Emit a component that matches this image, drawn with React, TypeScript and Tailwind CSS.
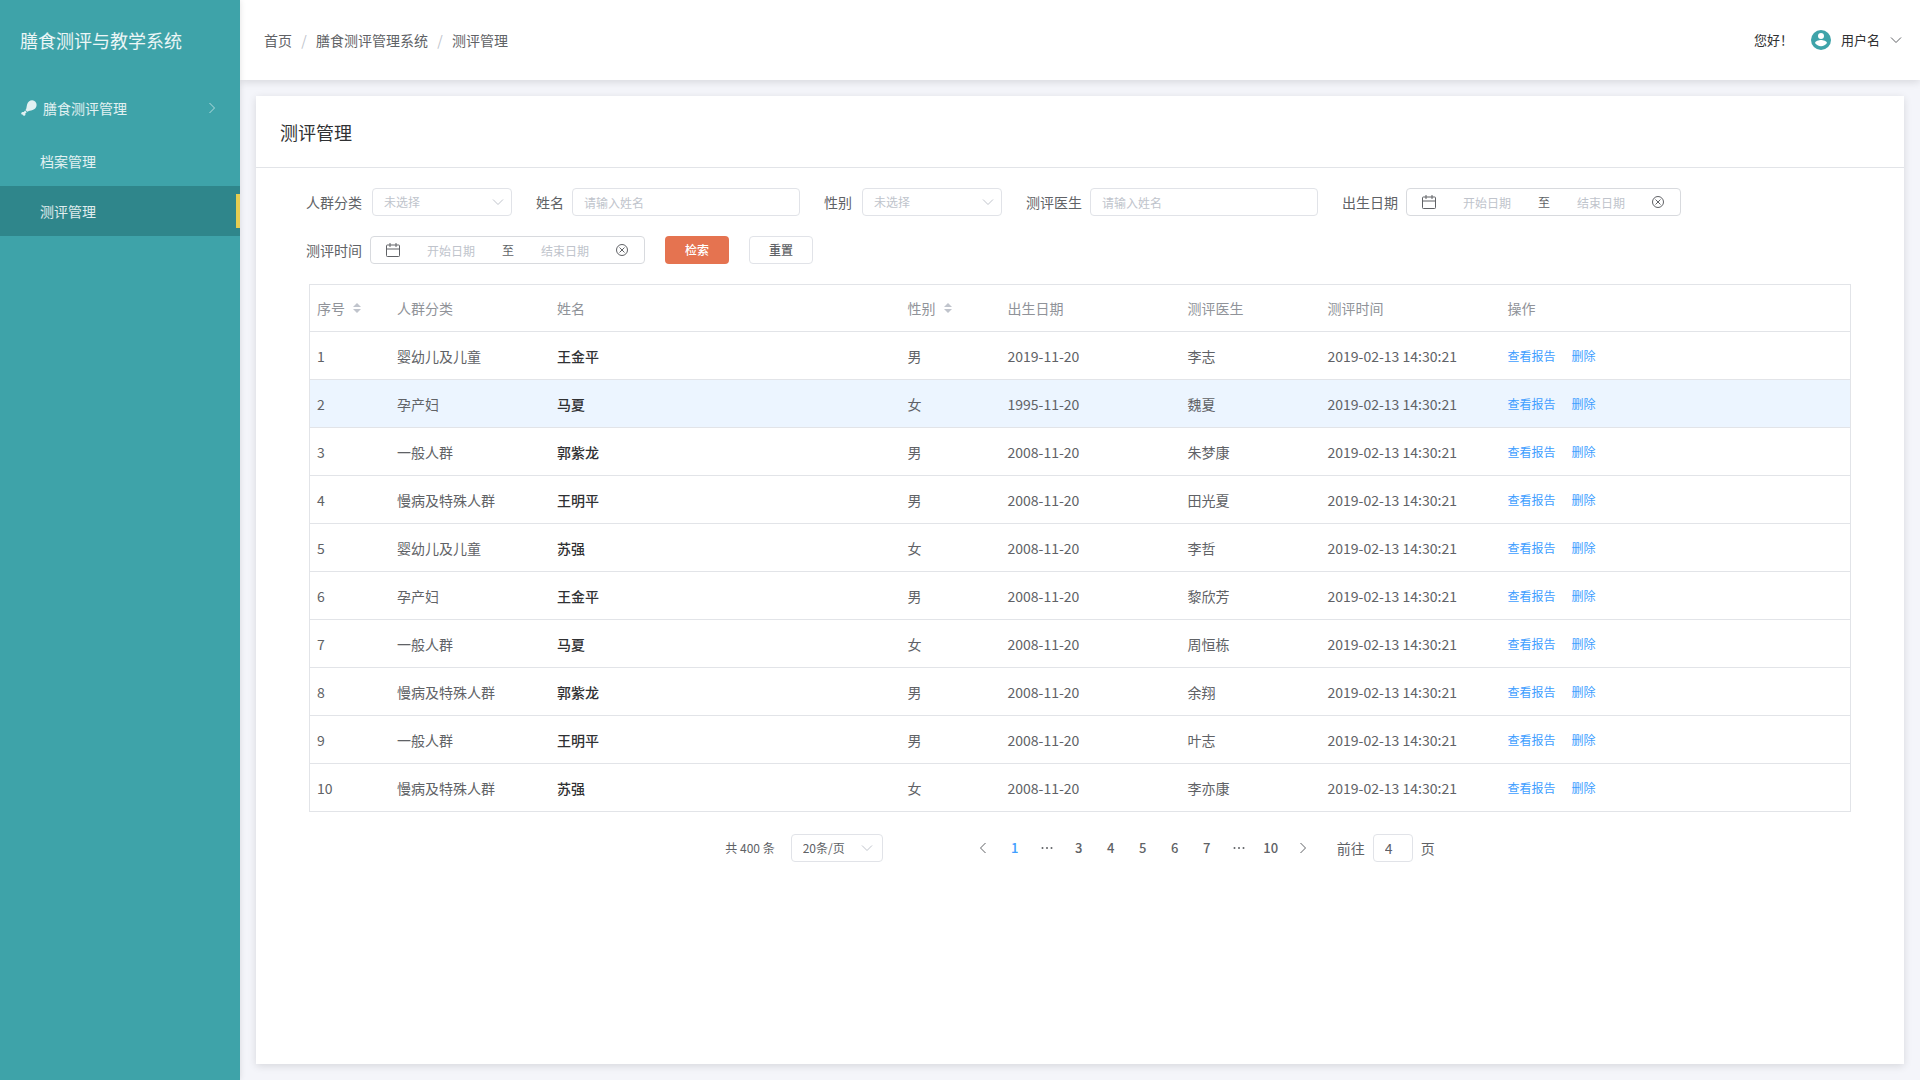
import { ReactNode } from 'react';

interface Assessment {
  id: number;
  group: string;
  name: string;
  gender: string;
  birthday: string;
  doctor: string;
}

const rows: Assessment[] = [
  { id: 1, group: '婴幼儿及儿童', name: '王金平', gender: '男', birthday: '2019-11-20', doctor: '李志' },
  { id: 2, group: '孕产妇', name: '马夏', gender: '女', birthday: '1995-11-20', doctor: '魏夏' },
  { id: 3, group: '一般人群', name: '郭紫龙', gender: '男', birthday: '2008-11-20', doctor: '朱梦康' },
  { id: 4, group: '慢病及特殊人群', name: '王明平', gender: '男', birthday: '2008-11-20', doctor: '田光夏' },
  { id: 5, group: '婴幼儿及儿童', name: '苏强', gender: '女', birthday: '2008-11-20', doctor: '李哲' },
  { id: 6, group: '孕产妇', name: '王金平', gender: '男', birthday: '2008-11-20', doctor: '黎欣芳' },
  { id: 7, group: '一般人群', name: '马夏', gender: '女', birthday: '2008-11-20', doctor: '周恒栋' },
  { id: 8, group: '慢病及特殊人群', name: '郭紫龙', gender: '男', birthday: '2008-11-20', doctor: '余翔' },
  { id: 9, group: '一般人群', name: '王明平', gender: '男', birthday: '2008-11-20', doctor: '叶志' },
  { id: 10, group: '慢病及特殊人群', name: '苏强', gender: '女', birthday: '2008-11-20', doctor: '李亦康' },
];

const columns = [
  { label: '序号', width: 'w-20', sortable: true },
  { label: '人群分类', width: 'w-40' },
  { label: '姓名', width: '' },
  { label: '性别', width: 'w-[100px]', sortable: true },
  { label: '出生日期', width: 'w-[180px]' },
  { label: '测评医生', width: 'w-[140px]' },
  { label: '测评时间', width: 'w-[180px]' },
  { label: '操作', width: '' },
];

// 0 stands for a run of skipped pages
const pages = [1, 0, 3, 4, 5, 6, 7, 0, 10];

interface ChevronProps {
  className: string;
  d?: string;
  viewBox?: string;
}

function Chevron({ className, d = 'M1 1.5L6 6.5L11 1.5', viewBox = '0 0 12 8' }: ChevronProps) {
  return (
    <svg className={className} viewBox={viewBox} fill="none" stroke="currentColor" aria-hidden="true">
      <path d={d} />
    </svg>
  );
}

function Drumstick() {
  return (
    <svg className="w-4 h-4" viewBox="0 0 16 16" fill="currentColor" aria-hidden="true">
      <path d="M11.300 0.200C13.800 0.300 15.700 2.300 15.600 4.900C15.500 7.300 13.900 9.200 11.600 9.900C9.600 10.500 7.600 10.600 6.200 11.800L4.500 10.100C5.700 8.600 5.500 6.600 6.100 4.400C6.800 1.800 8.800 0.100 11.300 0.200Z" />
      <path d="M4.100 10.600L5.700 12.200L4.300 13.400C4.700 14.400 4.300 15.400 3.400 15.700C2.500 16 1.700 15.500 1.600 14.600C.6 14.600 0 13.800 .3 12.900C.6 12.100 1.700 11.800 2.700 12.100Z" />
    </svg>
  );
}

function SortIcon() {
  return (
    <svg className="w-2 h-2.5" viewBox="0 0 8 10" fill="#c0c4cc" aria-hidden="true">
      <path d="M4 0L8 4H0Z" />
      <path d="M4 10L0 6H8Z" />
    </svg>
  );
}

function SelectField({ id, label }: { id: string; label: string }) {
  return (
    <div className="flex items-center gap-2.5">
      <label htmlFor={id}>{label}</label>
      <div className="relative">
        <select
          id={id}
          className="block appearance-none w-[140px] h-7 pl-[11px] pr-7 bg-white border border-[#e1e3e8] rounded text-xs text-[#c0c4cc]"
        >
          <option>未选择</option>
        </select>
        <Chevron className="absolute right-2 top-2.5 w-3 h-2 text-[#c0c4cc] pointer-events-none" />
      </div>
    </div>
  );
}

function TextField({ id, label }: { id: string; label: string }) {
  return (
    <div className="flex items-center gap-2">
      <label htmlFor={id}>{label}</label>
      <input
        id={id}
        type="text"
        placeholder="请输入姓名"
        className="w-[228px] h-7 px-[11px] border border-[#e1e3e8] rounded text-xs placeholder:text-[#c0c4cc]"
      />
    </div>
  );
}

function DateRange({ id, label }: { id: string; label: string }) {
  return (
    <div className="flex items-center gap-2">
      <label htmlFor={id}>{label}</label>
      <div className="flex items-center w-[275px] h-7 pl-[15px] pr-4 border border-[#d8dade] rounded-sm text-xs">
        <svg className="w-3.5 h-3.5 shrink-0" viewBox="0 0 14 14" fill="none" stroke="currentColor" aria-hidden="true">
          <rect x=".5" y="2" width="13" height="11.500" rx=".8" />
          <path d="M.5 6H13.500M4 0V4M10 0V4" />
        </svg>
        <input
          id={id}
          type="text"
          placeholder="开始日期"
          className="w-0 flex-1 h-full text-center placeholder:text-[#c0c4cc]"
        />
        <span>至</span>
        <input
          type="text"
          aria-label={`${label}结束`}
          placeholder="结束日期"
          className="w-0 flex-1 h-full text-center placeholder:text-[#c0c4cc]"
        />
        <button type="button" aria-label="清空">
          <svg className="w-3 h-3" viewBox="0 0 12 12" fill="none" stroke="currentColor" aria-hidden="true">
            <circle cx="6" cy="6" r="5.500" />
            <path d="M3.500 3.500L8.500 8.500M8.500 3.500L3.500 8.500" />
          </svg>
        </button>
      </div>
    </div>
  );
}

function PagerItem({ children, active, label }: { children: ReactNode; active?: boolean; label?: string }) {
  return (
    <button
      type="button"
      aria-label={label}
      className={`w-8 h-7 flex items-center justify-center ${active ? 'text-[#409eff]' : ''}`}
    >
      {children}
    </button>
  );
}

function Sidebar() {
  return (
    <aside className="relative z-20 w-60 shrink-0 bg-[#3ea3a9] text-white shadow-[0_0_6px_rgba(0,0,0,0.12)]">
      <h1 className="h-20 flex items-center px-5 text-lg text-white/90">膳食测评与教学系统</h1>
      <nav className="text-sm text-white/85">
        <button type="button" className="w-full h-14 flex items-center gap-1.5 pl-[21px] pr-6">
          <Drumstick />
          <span>膳食测评管理</span>
          <Chevron className="ml-auto w-2 h-3 text-white/60" viewBox="0 0 8 12" d="M1.500 1L6.500 6L1.500 11" />
        </button>
        <a href="#archives" className="h-[50px] flex items-center pl-10">
          档案管理
        </a>
        <a href="#assessments" className="h-[50px] flex items-center justify-between pl-10 bg-[#2f868b]">
          测评管理
          <span className="w-1 h-[34px] bg-[#e5cd52]" />
        </a>
      </nav>
    </aside>
  );
}

function Header() {
  return (
    <header className="relative z-10 h-20 shrink-0 flex items-center justify-between pl-6 pr-[18px] bg-white shadow-[0_2px_8px_rgba(0,0,0,0.12)]">
      <nav className="flex items-center text-sm text-[#606266]">
        <a href="#home">首页</a>
        <span className="w-6 text-center text-[#c0c4cc]">/</span>
        <a href="#system">膳食测评管理系统</a>
        <span className="w-6 text-center text-[#c0c4cc]">/</span>
        <span>测评管理</span>
      </nav>
      <div className="flex items-center text-[13px] text-[#303133]">
        <span className="mr-[18px]">您好！</span>
        <button type="button" className="flex items-center">
          <svg className="w-5 h-5 mr-2.5" viewBox="0 0 20 20" aria-hidden="true">
            <circle cx="10" cy="10" r="10" fill="#3ea3a9" />
            <circle cx="10" cy="6" r="3" fill="white" />
            <path d="M4 13C4 11 8 9.900 10 9.900C12 9.900 16 11 16 13C14.700 15 12.500 16.200 10 16.200C7.500 16.200 5.300 15 4 13Z" fill="white" />
          </svg>
          用户名
          <Chevron className="ml-2.5 w-3 h-2 text-[#606266]" />
        </button>
      </div>
    </header>
  );
}

function Filters() {
  return (
    <form className="flex flex-wrap items-center gap-x-6 gap-y-5 text-sm text-[#606266]">
      <SelectField id="group" label="人群分类" />
      <TextField id="name" label="姓名" />
      <SelectField id="gender" label="性别" />
      <TextField id="doctor" label="测评医生" />
      <DateRange id="birthday" label="出生日期" />
      <div className="flex items-center gap-5">
        <DateRange id="time" label="测评时间" />
        <button type="button" className="w-16 h-7 rounded-sm bg-[#e57350] text-xs font-medium text-white">
          检索
        </button>
        <button type="button" className="w-16 h-7 rounded border border-[#e1e3e8] text-xs font-medium">
          重置
        </button>
      </div>
    </form>
  );
}

function AssessmentTable() {
  return (
    <div className="mt-5 mx-[3px] border-r border-t border-[#e2e4e8]">
      <table className="w-full table-fixed border-separate border-spacing-0 text-sm text-[#606266] [&_tr>*]:px-2 [&_tr>*]:py-0 [&_tr>*]:border-b [&_tr>*]:border-[#e2e4e8] [&_tr>*:first-child]:border-l [&_tr>*:first-child]:pl-[7px]">
        <thead>
          <tr className="h-[47px] text-[#909399]">
            {columns.map(({ label, width, sortable }) => (
              <th key={label} className={`text-left font-normal ${width}`}>
                {sortable ? (
                  <button type="button" className="flex items-center gap-2">
                    {label}
                    <SortIcon />
                  </button>
                ) : (
                  label
                )}
              </th>
            ))}
          </tr>
        </thead>
        <tbody>
          {rows.map((row) => (
            <tr key={row.id} className={row.id === 2 ? 'h-12 bg-[#ecf5ff]' : 'h-12'}>
              <td>{row.id}</td>
              <td>{row.group}</td>
              <td className="font-medium text-[#303133]">{row.name}</td>
              <td>{row.gender}</td>
              <td>{row.birthday}</td>
              <td>{row.doctor}</td>
              <td className="whitespace-nowrap">2019-02-13 14:30:21</td>
              <td>
                <div className="flex gap-4 text-xs text-[#409eff]">
                  <a href="#report">查看报告</a>
                  <a href="#delete">删除</a>
                </div>
              </td>
            </tr>
          ))}
        </tbody>
      </table>
    </div>
  );
}

function Pagination() {
  return (
    <div className="mt-[22px] flex items-center justify-center text-xs text-[#606266]">
      <span>共 400 条</span>
      <div className="relative ml-4 mr-[84px]">
        <select
          aria-label="每页条数"
          className="block appearance-none w-[92px] h-7 pl-[11px] pr-6 bg-white border border-[#e1e3e8] rounded"
        >
          <option>20条/页</option>
        </select>
        <Chevron className="absolute right-2.5 top-2.5 w-3 h-2 text-[#c0c4cc] pointer-events-none" />
      </div>
      <div className="flex items-center text-[13px] font-medium">
        <PagerItem label="上一页">
          <Chevron className="w-2 h-3" viewBox="0 0 8 12" d="M6.500 1L1.500 6L6.500 11" />
        </PagerItem>
        {pages.map((page, index) => (
          <PagerItem key={index} active={page === 1} label={page ? undefined : '更多'}>
            {page || (
              <svg className="w-3 h-3" viewBox="0 0 12 12" fill="currentColor" aria-hidden="true">
                <circle cx="1.500" cy="6" r="1" />
                <circle cx="6" cy="6" r="1" />
                <circle cx="10.500" cy="6" r="1" />
              </svg>
            )}
          </PagerItem>
        ))}
        <PagerItem label="下一页">
          <Chevron className="w-2 h-3" viewBox="0 0 8 12" d="M1.500 1L6.500 6L1.500 11" />
        </PagerItem>
      </div>
      <label className="ml-[18px] flex items-center gap-2 text-sm">
        前往
        <input
          type="text"
          defaultValue="4"
          className="w-10 h-7 pl-[11px] border border-[#e1e3e8] rounded"
        />
        页
      </label>
    </div>
  );
}

export default function App() {
  return (
    <div className="min-h-screen flex bg-[#f4f5fa] font-['Noto_Sans_CJK_SC',sans-serif]">
      <Sidebar />
      <div className="flex-1 min-w-0 flex flex-col">
        <Header />
        <main className="flex-1 m-4 bg-white shadow-[0_2px_8px_rgba(0,0,0,0.12)]">
          <h2 className="h-18 flex items-center px-6 border-b border-[#e2e4e8] text-lg text-[#303133]">
            测评管理
          </h2>
          <div className="px-[50px] py-5">
            <Filters />
            <AssessmentTable />
            <Pagination />
          </div>
        </main>
      </div>
    </div>
  );
}
